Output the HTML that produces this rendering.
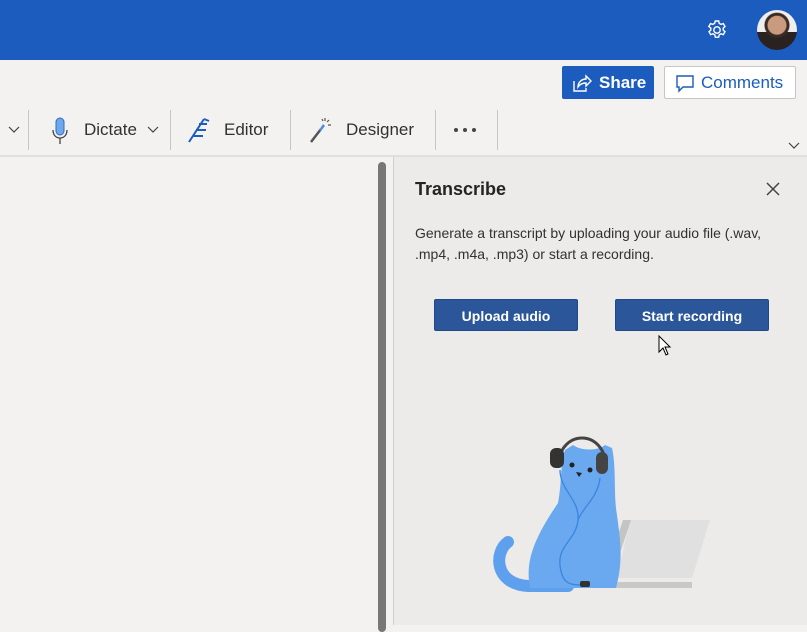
<!DOCTYPE html>
<html><head><style>
body{margin:0;width:807px;height:625px;overflow:hidden;font-family:"Liberation Sans",sans-serif;background:#f3f2f1;position:relative}
.a{position:absolute}
.sep{position:absolute;top:110px;width:1px;height:40px;background:#c8c6c4}
.tb{position:absolute;top:120px;font-size:17px;color:#323130}
.btn{position:absolute;top:299px;height:32px;background:#2b579a;border:1px solid #1e4a8a;border-radius:2px;color:#fff;font-weight:bold;font-size:14px;line-height:32px;text-align:center;box-sizing:border-box}
</style></head><body>
<div class="a" style="left:0;top:0;width:807px;height:60px;background:#1b5cbe"></div>
<svg class="a" style="left:705px;top:18px" width="24" height="24" viewBox="0 0 24 24" fill="none" stroke="#fff" stroke-width="1.4"><circle cx="12" cy="12" r="3.2"/><path d="M10.3 3h3.4l.5 2.4 1.8 1 2.3-.8 1.7 2.9-1.8 1.6v2l1.8 1.6-1.7 2.9-2.3-.8-1.8 1-.5 2.4h-3.4l-.5-2.4-1.8-1-2.3.8-1.7-2.9 1.8-1.6v-2L3.8 8.5l1.7-2.9 2.3.8 1.8-1z"/></svg>
<div class="a" style="left:757px;top:10px;width:40px;height:40px;border-radius:50%;background:radial-gradient(circle at 50% 38%,#c99a7e 0 9px,#3a2a24 10px 12px,transparent 13px),linear-gradient(#eee 0 55%,#2a2220 55%);overflow:hidden"></div>
<div class="a" style="left:562px;top:66px;width:92px;height:33px;background:#1b5cbe;border-radius:2px;color:#fff;font-weight:bold;font-size:17px;line-height:33px"><svg style="position:absolute;left:10px;top:7px" width="20" height="20" viewBox="0 0 20 20" fill="none" stroke="#fff" stroke-width="1.4"><path d="M2 8v10h12v-3M6 14c0-5 4-8 8-8V3l5 5-5 5V10c-3 0-6 1-8 4z"/></svg><span style="position:absolute;left:37px">Share</span></div>
<div class="a" style="left:664px;top:66px;width:132px;height:33px;background:#fff;border:1px solid #c8c6c4;box-sizing:border-box;border-radius:2px;color:#1b5cbe;font-size:17px;line-height:31px"><svg style="position:absolute;left:10px;top:7px" width="20" height="20" viewBox="0 0 20 20" fill="none" stroke="#1b5cbe" stroke-width="1.4"><path d="M2 2h16v11H8l-4 4v-4H2z"/></svg><span style="position:absolute;left:36px">Comments</span></div>
<svg class="a" style="left:8px;top:126px" width="12" height="8" viewBox="0 0 12 8" fill="none" stroke="#444" stroke-width="1.2"><path d="M1 1l5 5 5-5"/></svg>
<div class="sep" style="left:28px"></div>
<svg class="a" style="left:50px;top:116px" width="20" height="30" viewBox="0 0 20 30"><rect x="6" y="2" width="8" height="17" rx="4" fill="#6fa8ea" stroke="#2b6cc4"/><path d="M3 14c0 5 3 8 7 8s7-3 7-8M10 22v6" fill="none" stroke="#444" stroke-width="1.3"/></svg>
<div class="tb" style="left:84px">Dictate</div>
<svg class="a" style="left:147px;top:126px" width="12" height="8" viewBox="0 0 12 8" fill="none" stroke="#444" stroke-width="1.2"><path d="M1 1l5 5 5-5"/></svg>
<div class="sep" style="left:170px"></div>
<svg class="a" style="left:186px;top:116px" width="28" height="28" viewBox="0 0 28 28" fill="none" stroke="#1b5cbe" stroke-width="2"><path d="M3 26L18 3M7 20h10M10 14h10M13 8h8M18 3l5 2"/></svg>
<div class="tb" style="left:224px">Editor</div>
<div class="sep" style="left:290px"></div>
<svg class="a" style="left:308px;top:114px" width="26" height="30" viewBox="0 0 26 30"><path d="M3 28l10-13" stroke="#555" stroke-width="2.5"/><path d="M11 16l4-6 2 2-4 5z" fill="#4a90e2"/><path d="M17 4v3M21 6l-2 2M23 11h-3M14 5l1 2" stroke="#555" stroke-width="1.2"/></svg>
<div class="tb" style="left:346px">Designer</div>
<div class="sep" style="left:435px"></div>
<svg class="a" style="left:453px;top:127px" width="24" height="6"><circle cx="3" cy="3" r="2" fill="#444"/><circle cx="12" cy="3" r="2" fill="#444"/><circle cx="21" cy="3" r="2" fill="#444"/></svg>
<div class="sep" style="left:497px"></div>
<svg class="a" style="left:788px;top:142px" width="12" height="8" viewBox="0 0 12 8" fill="none" stroke="#444" stroke-width="1.2"><path d="M1 1l5 5 5-5"/></svg>
<div class="a" style="left:0;top:155px;width:807px;height:2px;background:#e1dfdd"></div>
<div class="a" style="left:378px;top:162px;width:8px;height:470px;border-radius:4px;background:#777"></div>
<div class="a" style="left:393px;top:157px;width:414px;height:468px;background:#edebe9;border-left:1px solid #d2d0ce"></div>
<div class="a" style="left:415px;top:179px;font-size:18px;font-weight:bold;color:#252423">Transcribe</div>
<svg class="a" style="left:766px;top:182px" width="14" height="14" viewBox="0 0 14 14" stroke="#444" stroke-width="1.5"><path d="M1 1l12 12M13 1L1 13"/></svg>
<div class="a" style="left:415px;top:223px;font-size:14px;color:#323130;line-height:21px;width:380px">Generate a transcript by uploading your audio file (.wav, .mp4, .m4a, .mp3) or start a recording.</div>
<div class="btn" style="left:434px;width:144px">Upload audio</div>
<div class="btn" style="left:615px;width:154px">Start recording</div>
<svg class="a" style="left:658px;top:335px" width="14" height="22" viewBox="0 0 14 22"><path d="M1 1v16l4-4 3 7 2-1-3-7h5z" fill="#fff" stroke="#000"/></svg>
<svg class="a" style="left:480px;top:420px" width="240" height="180" viewBox="0 0 240 180">
<path d="M150 100h80l-18 58h-75z" fill="#e0e0e0"/><path d="M143 100h8l-20 60h-8z" fill="#c4c4c4"/>
<path d="M90 162h122v6H90z" fill="#c8c8c8"/>
<path d="M28 122c-14 10-14 42 20 44h40" fill="none" stroke="#5fa0ee" stroke-width="12" stroke-linecap="round"/>
<path d="M85 30l8-5c8 6 25 6 32 0l7 3c4 18 2 40 4 60 4 30 8 50 0 80H50c-6-30 8-55 28-85 4-20 2-38 7-53z" fill="#6aa8f0"/>
<path d="M78 48c0-40 48-40 48 0" fill="none" stroke="#444" stroke-width="3"/>
<rect x="70" y="28" width="14" height="20" rx="6" fill="#333"/><rect x="116" y="32" width="12" height="22" rx="6" fill="#444"/>
<circle cx="92" cy="45" r="2.5" fill="#222"/><circle cx="110" cy="50" r="2.5" fill="#222"/><path d="M96 52l6 1-3 4z" fill="#222"/>
<path d="M80 50c0 20 20 30 18 50-2 20-20 25-18 45s10 20 26 20M120 58c-2 20-18 30-22 42" fill="none" stroke="#3a86e0" stroke-width="1.3"/>
<rect x="100" y="161" width="10" height="6" rx="2" fill="#333"/>
</svg>
</body></html>
